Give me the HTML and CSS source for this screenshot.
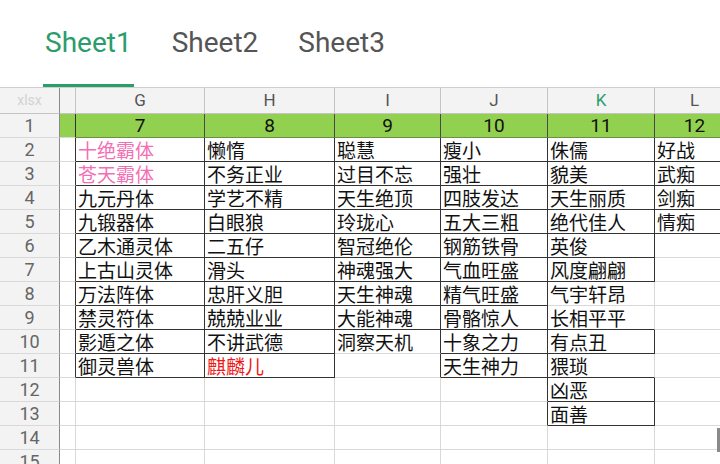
FILE: index.html
```html
<!DOCTYPE html>
<html lang="zh">
<head>
    <meta charset="UTF-8">
    <meta name="viewport" content="width=device-width, initial-scale=1.0">
    <title>Sheet1</title>
    <link rel="stylesheet" href="styles.css">
</head>
<body>
    <div class="tabs">
        <div class="tab active"><span>Sheet1</span></div>
        <div class="tab"><span>Sheet2</span></div>
        <div class="tab"><span>Sheet3</span></div>
    </div>

    <div class="sheet">
        <!-- column header -->
        <div class="hd corner">xlsx</div><div class="hd sp"></div>
        <div class="hd">G</div><div class="hd">H</div><div class="hd">I</div><div class="hd">J</div><div class="hd sel">K</div><div class="hd">L</div>

        <!-- row 1 -->
        <div class="rh">1</div><div class="sp g r"></div>
        <div class="c g num">7</div><div class="c g num">8</div><div class="c g num">9</div><div class="c g num">10</div><div class="c g num">11</div><div class="c g num">12</div>

        <div class="rh">2</div><div class="sp r"></div>
        <div class="c r b pk">十绝霸体</div><div class="c r b">懒惰</div><div class="c r b">聪慧</div><div class="c r b">瘦小</div><div class="c r b">侏儒</div><div class="c b">好战</div>

        <div class="rh">3</div><div class="sp r"></div>
        <div class="c r b pk">苍天霸体</div><div class="c r b">不务正业</div><div class="c r b">过目不忘</div><div class="c r b">强壮</div><div class="c r b">貌美</div><div class="c b">武痴</div>

        <div class="rh">4</div><div class="sp r"></div>
        <div class="c r b">九元丹体</div><div class="c r b">学艺不精</div><div class="c r b">天生绝顶</div><div class="c r b">四肢发达</div><div class="c r b">天生丽质</div><div class="c b">剑痴</div>

        <div class="rh">5</div><div class="sp r"></div>
        <div class="c r b">九锻器体</div><div class="c r b">白眼狼</div><div class="c r b">玲珑心</div><div class="c r b">五大三粗</div><div class="c r b">绝代佳人</div><div class="c b">情痴</div>

        <div class="rh">6</div><div class="sp r"></div>
        <div class="c r b">乙木通灵体</div><div class="c r b">二五仔</div><div class="c r b">智冠绝伦</div><div class="c r b">钢筋铁骨</div><div class="c r b">英俊</div><div class="c"></div>

        <div class="rh">7</div><div class="sp r"></div>
        <div class="c r b">上古山灵体</div><div class="c r b">滑头</div><div class="c r b">神魂强大</div><div class="c r b">气血旺盛</div><div class="c r b">风度翩翩</div><div class="c"></div>

        <div class="rh">8</div><div class="sp r"></div>
        <div class="c r b">万法阵体</div><div class="c r b">忠肝义胆</div><div class="c r b">天生神魂</div><div class="c r b">精气旺盛</div><div class="c">气宇轩昂</div><div class="c"></div>

        <div class="rh">9</div><div class="sp r"></div>
        <div class="c r b">禁灵符体</div><div class="c r b">兢兢业业</div><div class="c r b">大能神魂</div><div class="c r b">骨骼惊人</div><div class="c b">长相平平</div><div class="c"></div>

        <div class="rh">10</div><div class="sp r"></div>
        <div class="c r b">影遁之体</div><div class="c r b">不讲武德</div><div class="c r">洞察天机</div><div class="c r b">十象之力</div><div class="c r b">有点丑</div><div class="c"></div>

        <div class="rh">11</div><div class="sp r"></div>
        <div class="c r b">御灵兽体</div><div class="c r b rd">麒麟儿</div><div class="c r"></div><div class="c r b">天生神力</div><div class="c b">猥琐</div><div class="c"></div>

        <div class="rh">12</div><div class="sp"></div>
        <div class="c"></div><div class="c"></div><div class="c"></div><div class="c r"></div><div class="c r b">凶恶</div><div class="c"></div>

        <div class="rh">13</div><div class="sp"></div>
        <div class="c"></div><div class="c"></div><div class="c"></div><div class="c r"></div><div class="c r b">面善</div><div class="c"></div>

        <div class="rh">14</div><div class="sp"></div>
        <div class="c"></div><div class="c"></div><div class="c"></div><div class="c"></div><div class="c"></div><div class="c"></div>

        <div class="rh">15</div><div class="sp"></div>
        <div class="c"></div><div class="c"></div><div class="c"></div><div class="c"></div><div class="c"></div><div class="c"></div>

        <div class="scroll"></div>
    </div>
</body>
</html>
```

FILE: styles.css
```css
body {
    margin: 0;
    width: 720px;
    height: 464px;
    overflow: hidden;
    background-color: #fff;
    font-family: Roboto, "Noto Sans", sans-serif;
}

.tabs {
    display: flex;
    height: 87px;
    padding-left: 25px;
    box-sizing: border-box;
}

.tab {
    padding: 26px 18px 0;
    font-size: 28px;
    color: #555;
}

.tab span {
    display: block;
    height: 100%;
    padding: 0 2px;
    box-sizing: border-box;
}

.tab.active {
    color: #2a9d6a;
}

.tab.active span {
    border-bottom: 3px solid #2a9d6a;
}

.sheet {
    position: relative;
    display: grid;
    grid-template-columns: 60px 16px 129px 130px 106px 107px 107px 80px;
    grid-template-rows: 26px repeat(15, 24px);
    border-top: 1px solid #cfcfcf;
    height: 376px;
    overflow: hidden;
}

.sheet > div {
    box-sizing: border-box;
    border-right: 1px solid #d9d9d9;
    border-bottom: 1px solid #d9d9d9;
    white-space: nowrap;
    overflow: hidden;
}

.hd {
    background-color: #f3f3f3;
    color: #555;
    font-size: 17px;
    text-align: center;
    line-height: 25px;
    border-color: #c4c4c4 !important;
}

.hd.sel {
    color: #2a9d6a;
}

.corner {
    color: #d2d2d2;
    font-size: 14px;
    border-right-color: #8a8a8a !important;
}

.rh {
    background-color: #f3f3f3;
    color: #666;
    font-size: 18px;
    text-align: center;
    line-height: 23px;
    border-right-color: #8a8a8a !important;
}

.c {
    font-family: "Noto Sans CJK SC", "Noto Sans", sans-serif;
    font-size: 19px;
    line-height: 23px;
    padding-left: 2px;
    color: #111;
}

.g {
    background-color: #92d050;
}

.num {
    font-family: Roboto, "Noto Sans", sans-serif;
    text-align: center;
    padding-left: 0;
    border-right-color: #4a4a4a !important;
    border-bottom-color: #6b8f45 !important;
}

.sheet > .r {
    border-right-color: #333;
}

.sheet > .b {
    border-bottom-color: #333;
}

.pk {
    color: #f36fb4;
}

.rd {
    color: #f01818;
}

.scroll {
    position: absolute;
    right: 0;
    top: 340px;
    width: 3px;
    height: 24px;
    background-color: #8a8a8a;
    border: none !important;
}
```
